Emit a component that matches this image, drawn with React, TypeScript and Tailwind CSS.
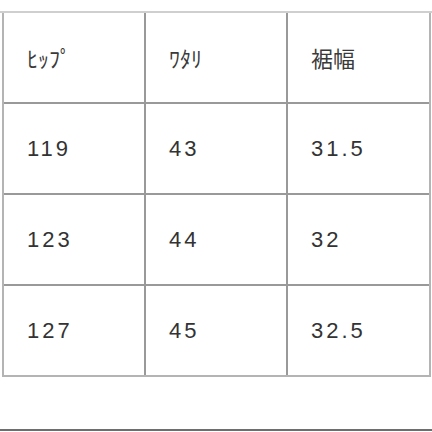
import * as React from 'react'

const rows = [
  ['119', '43', '31.5'],
  ['123', '44', '32'],
  ['127', '45', '32.5'],
]

const heads = ['ﾋｯﾌﾟ', 'ﾜﾀﾘ', '裾幅']

export default function App(){
  return (
    <div className="w-[432px] h-[432px] bg-white flex flex-col overflow-hidden">
      <div className="mt-[11px] border-t-2 border-[#cfcfcf]" />
      <div className="ml-[2px] w-[429px] border-x-2 border-b-2 border-[#b4b4b4]">
        <div className="grid grid-cols-[140px_140px_141px] grid-rows-[89px_89px_89px_89px] gap-[2px] bg-[#999999]">
          {heads.map(h => (
            <div key={h} className="bg-white flex items-center pl-[23px] text-[22px] text-[#3a3a3a] font-['Noto_Sans_CJK_JP',sans-serif]">{h}</div>
          ))}
          {rows.flat().map((v, i) => (
            <div key={i} className="bg-white flex items-center pl-[23px] text-[22px] tracking-[3px] text-[#333333] font-['Liberation_Sans',Arial,sans-serif]">{v}</div>
          ))}
        </div>
      </div>
      <div className="mt-[52px] border-t-2 border-[#6e6e6e]" />
    </div>
  )
}
